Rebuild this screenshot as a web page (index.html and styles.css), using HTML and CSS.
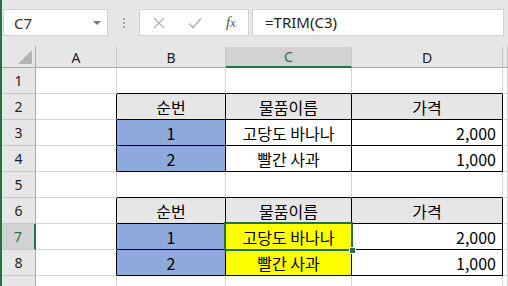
FILE: index.html
```html
<!DOCTYPE html>
<html>
<head>
<meta charset="utf-8">
<link rel="stylesheet" href="styles.css">
</head>
<body>
<div class="app">
  <div class="fbar">
    <div class="namebox">
      <span class="nb-text">C7</span>
      <span class="nb-arrow"></span>
    </div>
    <div class="grip"><span></span><span></span><span></span></div>
    <div class="fbtns">
      <svg class="ico" width="14" height="14" viewBox="0 0 14 14"><path d="M2 2 L12 12 M12 2 L2 12" stroke="#b3b3b3" stroke-width="1.3" fill="none"/></svg>
      <svg class="ico" width="16" height="14" viewBox="0 0 16 14"><path d="M2 7.5 L6 11.5 L14 2.5" stroke="#b3b3b3" stroke-width="1.6" fill="none"/></svg>
      <span class="fx"><i>f</i><i class="fx-x">x</i></span>
    </div>
    <div class="finput">=TRIM(C3)</div>
  </div>

  <div class="sheet">
    <div class="corner"><span class="tri"></span></div>
    <div class="ch">A</div>
    <div class="ch">B</div>
    <div class="ch sel">C</div>
    <div class="ch">D</div>
    <div class="ch"></div>

    <div class="rh">1</div>
    <div class="c"></div>
    <div class="c bb"></div>
    <div class="c bb"></div>
    <div class="c bb"></div>
    <div class="c"></div>

    <div class="rh">2</div>
    <div class="c br"></div>
    <div class="c t hd">순번</div>
    <div class="c t hd">물품이름</div>
    <div class="c t hd">가격</div>
    <div class="c"></div>

    <div class="rh">3</div>
    <div class="c br"></div>
    <div class="c t blue">1</div>
    <div class="c t">고당도 바나나</div>
    <div class="c t num">2,000</div>
    <div class="c"></div>

    <div class="rh">4</div>
    <div class="c br"></div>
    <div class="c t blue">2</div>
    <div class="c t">빨간 사과</div>
    <div class="c t num">1,000</div>
    <div class="c"></div>

    <div class="rh">5</div>
    <div class="c"></div>
    <div class="c bb"></div>
    <div class="c bb"></div>
    <div class="c bb"></div>
    <div class="c"></div>

    <div class="rh">6</div>
    <div class="c br"></div>
    <div class="c t hd">순번</div>
    <div class="c t hd">물품이름</div>
    <div class="c t hd">가격</div>
    <div class="c"></div>

    <div class="rh sel">7</div>
    <div class="c br"></div>
    <div class="c t blue">1</div>
    <div class="c t yellow active">고당도 바나나<span class="selbox"><span class="handle"></span></span></div>
    <div class="c t num">2,000</div>
    <div class="c"></div>

    <div class="rh">8</div>
    <div class="c br"></div>
    <div class="c t blue">2</div>
    <div class="c t yellow">빨간 사과</div>
    <div class="c t num">1,000</div>
    <div class="c"></div>

    <div class="rh"></div>
    <div class="c"></div>
    <div class="c"></div>
    <div class="c"></div>
    <div class="c"></div>
    <div class="c"></div>
  </div>
</div>
</body>
</html>
```

FILE: styles.css
```css
* { box-sizing: border-box; }
html, body { margin: 0; padding: 0; }
body {
  width: 508px;
  height: 286px;
  overflow: hidden;
  background: #ffffff;
  font-family: "Noto Sans", "Liberation Sans", sans-serif;
}
.app {
  border-left: 2px solid #217346;
  height: 286px;
  overflow: hidden;
  background: #e6e6e6;
}
.fbar {
  height: 46px;
  display: flex;
  align-items: flex-start;
  padding-top: 9px;
  padding-left: 1px;
}
.namebox {
  width: 105px;
  height: 27px;
  background: #fff;
  border: 1px solid #d2d2d2;
  display: flex;
  align-items: center;
  justify-content: space-between;
  padding: 0 6px 0 10px;
}
.nb-text { font-size: 15px; color: #333; }
.nb-arrow {
  width: 0; height: 0;
  border-left: 4px solid transparent;
  border-right: 4px solid transparent;
  border-top: 4px solid #7a7a7a;
}
.grip {
  width: 31px;
  height: 27px;
  display: flex;
  flex-direction: column;
  align-items: center;
  justify-content: center;
  gap: 2px;
}
.grip span { width: 2px; height: 2px; background: #a8a8a8; }
.fbtns {
  width: 110px;
  height: 27px;
  background: #fff;
  border: 1px solid #d2d2d2;
  display: flex;
  align-items: center;
  padding-left: 12px;
  gap: 21px;
}
.ico { display: block; }
.fx {
  font-family: "Liberation Serif", serif;
  font-size: 15px;
  color: #555;
  margin-left: 2px;
}
.fx-x { font-size: 12px; }
.finput {
  flex: 1;
  height: 27px;
  margin-left: 3px;
  margin-right: 4px;
  background: #fff;
  border: 1px solid #d2d2d2;
  font-size: 15px;
  color: #222;
  padding-left: 12px;
  line-height: 25px;
}

.sheet {
  display: grid;
  grid-template-columns: 34px 81px 109px 126px 151px 1fr;
  grid-template-rows: 22px repeat(8, 26px) 26px;
  background: #fff;
}
.corner, .ch, .rh {
  background: #e6e6e6;
  border-right: 1px solid #c3c3c3;
  border-bottom: 1px solid #ababab;
  font-size: 14px;
  color: #222;
  display: flex;
  align-items: center;
  justify-content: center;
}
.ch { border-right: 1px solid #c8c8c8; border-top: 1px solid #e6e6e6; }
.rh { border-right: 1px solid #ababab; border-bottom: 1px solid #c8c8c8; }
.corner { position: relative; border-right-color: #ababab; }
.tri {
  position: absolute;
  right: 3px;
  bottom: 3px;
  width: 0; height: 0;
  border-left: 14px solid transparent;
  border-bottom: 14px solid #b4b4b4;
}
.ch.sel {
  background: #d2d2d2;
  color: #217346;
  border-bottom: 2px solid #217346;
}
.rh.sel {
  background: #d2d2d2;
  color: #217346;
  border-right: 2px solid #217346;
}
.c {
  border-right: 1px solid #d4d4d4;
  border-bottom: 1px solid #d4d4d4;
}
.c.bb { border-bottom-color: #000; }
.c.br { border-right-color: #000; }
.c.t {
  border-right-color: #000;
  border-bottom-color: #000;
  font-family: "Noto Sans CJK KR", "Noto Sans", sans-serif;
  font-size: 16px;
  color: #000;
  display: flex;
  align-items: center;
  justify-content: center;
}
.hd { background: #e7e6e6; }
.blue { background: #8ea9db; }
.yellow { background: #ffff00; }
.num { justify-content: flex-end !important; padding-right: 6px; }
.active { position: relative; }
.selbox {
  position: absolute;
  left: -2px;
  top: -2px;
  right: -2px;
  bottom: -2px;
  border: 2px solid #217346;
}
.handle {
  position: absolute;
  right: -5px;
  bottom: -5px;
  width: 7px;
  height: 7px;
  background: #217346;
  border: 1px solid #fff;
}
```
